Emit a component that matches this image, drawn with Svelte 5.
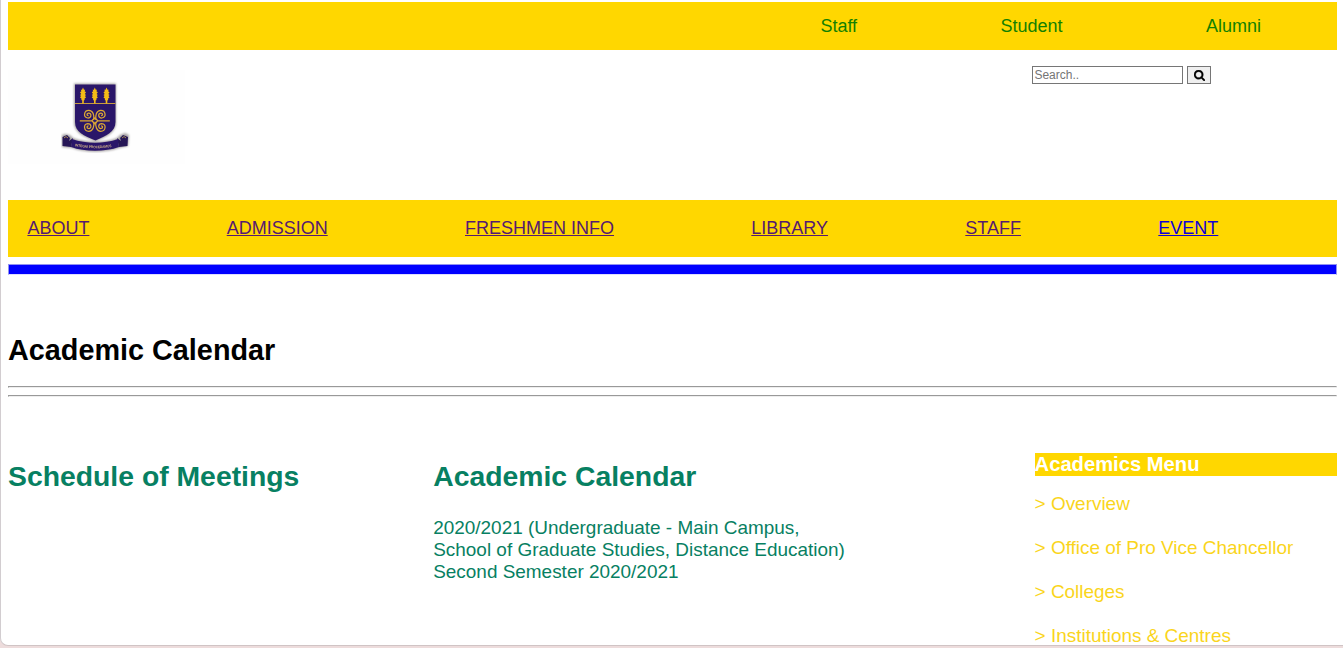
<script>
  const topLinks = ['Staff', 'Student', 'Alumni'];
  const navLinks = ['ABOUT', 'ADMISSION', 'FRESHMEN INFO', 'LIBRARY', 'STAFF', 'EVENT'];
  const menu = ['Overview', 'Office of Pro Vice Chancellor', 'Colleges', 'Institutions & Centres'];
</script>

<div class="sheet">
  <div class="topbar">
    {#each topLinks as link}<span>{link}</span>{/each}
  </div>

  <header>
    <div class="logo">
      <svg viewBox="0 0 70 72" width="70" height="72" aria-label="University crest">
        <defs>
          <filter id="soft" x="-10%" y="-10%" width="120%" height="120%"><feGaussianBlur stdDeviation="0.35" /></filter>
          <filter id="shade" x="-10%" y="-10%" width="120%" height="120%"><feGaussianBlur stdDeviation="0.9" /></filter>
          <g id="wheat" fill="#f4bd18">
            <path d="M0 -8 L1 -5.800 L2.200 -5.800 L1.600 -4.200 L3 -3.200 L1.800 -1.600 L3 -.6 L2 .6 L3 2 L1.600 3 L1.600 4.500 L.8 5 V8 H-.8 V5 L-1.600 4.500 L-1.600 3 L-3 2 L-2 .6 L-3 -.6 L-1.800 -1.600 L-3 -3.200 L-1.600 -4.200 L-2.200 -5.800 L-1 -5.800Z" />
          </g>
          <path id="curl" d="M1 -1 C.5 -5 1.500 -10.500 6 -10.500 C11 -10.500 12 -3 7 -2.800 C3 -2.800 3 -8 6.300 -7.700 C8.500 -7.300 8 -5 6.300 -5.200" fill="none" stroke="#dca834" stroke-width="1.25" />
        </defs>
        <g filter="url(#shade)" fill="#a5a1a1">
          <path d="M13 2.500 H55 V41 C55 52 45 56 34.500 60 C23 56 13 52 13 41Z" />
          <path d="M1 54 L4 53 L9 54 L12 57 C26 62 43 62 56 57 L59 54 L64 52 L68 54 L67 65 L58 67 C44 72 24 72 11 67 L1 66Z" />
        </g>
        <g filter="url(#soft)">
          <path d="M14 3.500 H54.500 V41 C54.500 51 45 55 34.500 59.500 C23 55 14 51 14 41Z" fill="#2b1769" />
          <path d="M14 22.500 H54.500" stroke="#c79b40" stroke-width="1" />
          <use href="#wheat" x="22" y="14.500" />
          <use href="#wheat" x="33.800" y="14.500" />
          <use href="#wheat" x="45.500" y="14.500" />
          <g transform="translate(33.800 39.800)">
            <use href="#curl" />
            <use href="#curl" transform="scale(-1 1)" />
            <use href="#curl" transform="scale(1 -1)" />
            <use href="#curl" transform="scale(-1 -1)" />
            <path d="M-15 0 H-3 M3 0 H15 M0 -3 L3 0 L0 3 L-3 0Z" fill="none" stroke="#dca834" stroke-width="1.3" />
          </g>
          <path d="M1.500 56 L6 54 L9 57 L8 60 L12 57 L10 66 L1.500 65Z M67 56 L62 54 L59 57 L60 60 L56 57 L58 66 L66.500 65Z" fill="#261657" />
          <path d="M11 58 C25 63 43 63 57 58 L58 66 C44 71 24 71 10 66Z" fill="#2b1769" />
          <path d="M3 57 Q5 54 7 57 M65 57 Q63 54 61 57" fill="none" stroke="#a58a54" stroke-width="1" />
          <path id="motto" d="M14 65.200 Q34 69.200 56 65.200" fill="none" />
          <text fill="#cdb088" font-size="3.600" font-weight="bold"><textPath href="#motto" textLength="37" lengthAdjust="spacingAndGlyphs">INTEGRI PROCEDAMUS</textPath></text>
        </g>
      </svg>
    </div>
    <form class="search" onsubmit={(e) => e.preventDefault()}>
      <input type="text" placeholder="Search.." />
      <button type="submit" aria-label="Search">
        <svg viewBox="0 0 1664 1664" width="11" height="11"><path stroke="#000" stroke-width="50" d="M1152 704q0-185-131.500-316.500T704 256 387.500 387.500 256 704t131.500 316.500T704 1152t316.500-131.500T1152 704zm512 832q0 52-38 90t-90 38q-54 0-90-38l-343-342q-179 124-399 124-143 0-273.500-55.500t-225-150-150-225T0 704t55.500-273.500 150-225 225-150T704 0t273.500 55.500 225 150 150 225T1408 704q0 220-124 399l343 343q37 37 37 90z" /></svg>
      </button>
    </form>
  </header>

  <nav>
    {#each navLinks as link}<a href="#top" class:fresh={link === 'EVENT'}>{link}</a>{/each}
  </nav>
  <div class="rule"></div>

  <h1>Academic Calendar</h1>
  <hr />
  <hr />

  <main>
    <section><h2>Schedule of Meetings</h2></section>
    <section>
      <h2>Academic Calendar</h2>
      <p>2020/2021 (Undergraduate - Main Campus,<br />School of Graduate Studies, Distance Education)<br />Second Semester 2020/2021</p>
    </section>
    <aside>
      <h3>Academics Menu</h3>
      {#each menu as item}<div class="item">&gt; {item}</div>{/each}
    </aside>
  </main>
</div>

<style>
  :global(body) { background: #eddcdc; overflow: hidden; }
  .sheet {
    box-sizing: border-box;
    height: 646px;
    padding: 2px 6px 0 7px;
    overflow: hidden;
    background: #fff;
    border-left: 1px solid #d2cdd0;
    border-bottom: 1px solid #d0c4c5;
    border-bottom-left-radius: 8px;
    font: 18px/20px "Liberation Sans", Arial, sans-serif;
  }
  .topbar {
    box-sizing: border-box;
    display: flex;
    justify-content: flex-end;
    gap: 143.400px;
    height: 48px;
    padding: 14px 76px 0 0;
    background: #ffd700;
    color: #128000;
  }
  header { display: flex; justify-content: space-between; height: 150px; }
  .logo { box-sizing: border-box; width: 177px; height: 94px; margin-top: 20px; padding: 11px 0 0 53px; background: #fefefe; }
  .logo svg { display: block; }
  .search { display: flex; gap: 4px; margin: 16px 126px 0 0; height: 18px; }
  input {
    box-sizing: border-box;
    width: 151px;
    height: 18px;
    padding: 0 1.400px;
    border: 1px solid #767676;
    border-radius: 0;
    font: 12px "Liberation Sans", Arial, sans-serif;
  }
  input::placeholder { color: #757575; }
  button {
    box-sizing: border-box;
    display: flex;
    align-items: center;
    justify-content: center;
    width: 24px;
    height: 18px;
    padding: 0;
    border: 1px solid #767676;
    border-radius: 0;
    background: #efefef;
  }
  nav {
    box-sizing: border-box;
    display: flex;
    gap: 137.300px;
    height: 57px;
    padding: 18px 0 0 19.400px;
    background: #ffd700;
    white-space: nowrap;
  }
  a { color: #551a70; }
  a.fresh { color: #1000d8; }
  .rule { height: 9px; margin: 7px 0 0; border: 1px solid #9191f0; border-bottom-color: #dedeff; background: #00f; }
  h1 { margin: 58px 0 0; font-size: 28.800px; line-height: 34px; }
  hr { height: 0; margin: 0 0 7px; border: 1px solid; border-color: #999 #eee #eee #999; }
  h1 + hr { margin-top: 19px; }
  main { display: grid; grid-template-columns: 425.200px 601.400px 1fr; margin-top: 56px; color: #078062; }
  h2 { margin: 6px 0 0; font-size: 28.350px; line-height: 34px; }
  p { margin: 24px 0 0; font-size: 18.950px; line-height: 22px; }
  aside { color: #fad51c; font-size: 18.950px; }
  h3 { margin: 0; height: 23px; background: #ffd700; color: #fff; font-size: 20.200px; line-height: 23px; }
  .item { height: 22px; margin: 17px 0 22px; line-height: 22px; }
  .item + .item { margin-top: 22px; }
</style>
